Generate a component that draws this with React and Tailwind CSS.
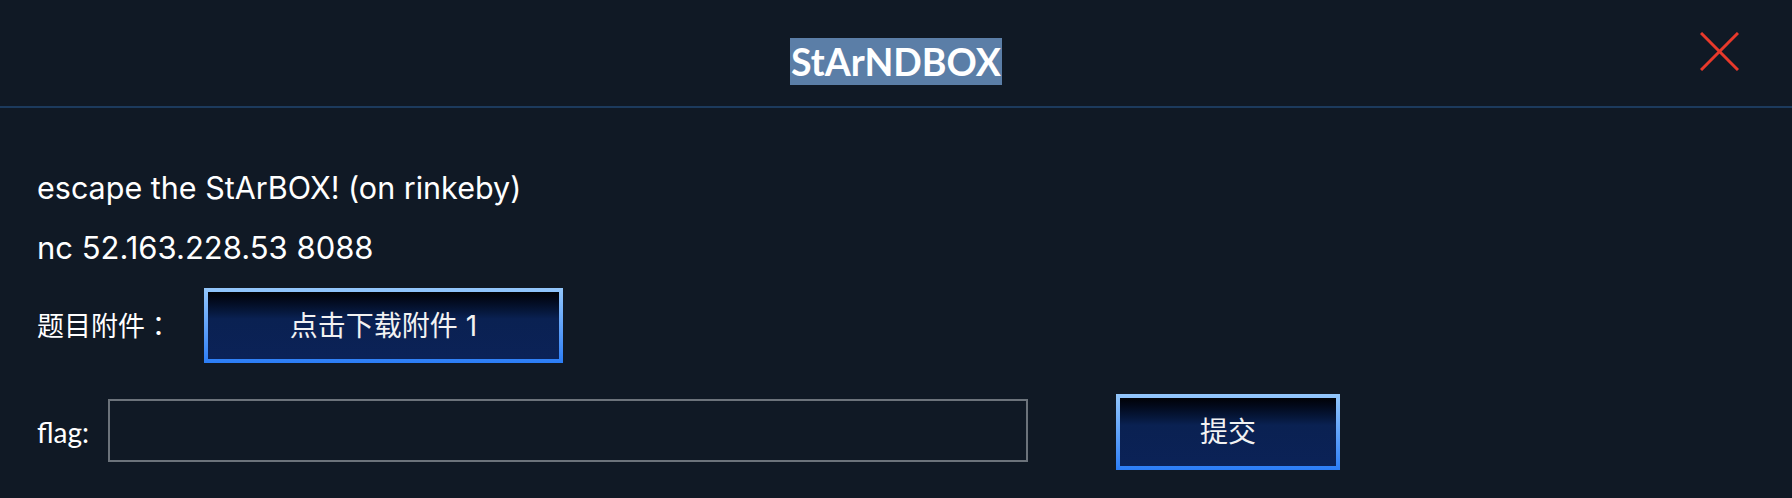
import React from 'react';

const CJK = "font-['Inter','Noto_Sans_CJK_SC',sans-serif]";

function GlowButton({ children, className = '' }) {
  return (
    <button className={`p-[4px] bg-gradient-to-b from-[#93c6fb] to-[#2b7df6] ${className}`}>
      <span className="flex h-full w-full items-center justify-center bg-gradient-to-b from-[#010308] via-[#0a2152] via-40% to-[#0b2257] text-[28px] text-[#f2f2f2]">
        {children}
      </span>
    </button>
  );
}

export default function App() {
  return (
    <div className={`min-h-screen w-full bg-[#101925] text-white ${CJK}`}>
      {/* Header */}
      <div className="grid h-[108px] grid-cols-[1fr_auto_1fr] border-b-2 border-[#1c3a5d]">
        <div />
        <div className="pt-[38px]">
          <span className="inline-block h-[47px] bg-[#5b7ea7] px-[1px] font-['Lato',sans-serif] text-[37.5px] font-bold leading-[47px] text-white">
            StArNDBOX
          </span>
        </div>
        <div className="flex justify-end pr-[53px] pt-[32px]">
          <button aria-label="Close" className="h-[39px] w-[39px]">
            <svg width="39" height="39" viewBox="0 0 39 39" fill="none" stroke="#e8392b" strokeWidth="3">
              <line x1="1" y1="1" x2="38" y2="38" />
              <line x1="38" y1="1" x2="1" y2="38" />
            </svg>
          </button>
        </div>
      </div>

      {/* Body */}
      <div className="px-[37px] pt-[50px]">
        <p className="h-[60px] text-[30.5px] leading-[60px]">escape the StArBOX! (on rinkeby)</p>
        <p className="h-[60px] text-[31px] leading-[60px]">nc 52.163.228.53 8088</p>

        <div className="mt-[10px] flex h-[75px] items-center">
          <span className="w-[167px] font-['Noto_Sans_CJK_TC',sans-serif] text-[27px]">题目附件：</span>
          <GlowButton className="h-[75px] w-[359px]">点击下载附件 1</GlowButton>
        </div>

        <div className="mt-[31px] flex h-[76px] items-center">
          <label className="w-[71px] font-['Lato',sans-serif] text-[28px] text-white">flag:</label>
          <input
            type="text"
            className="mt-[-4px] h-[63px] w-[920px] border-2 border-[#6c737b] bg-transparent px-3 text-[24px] text-white outline-none"
          />
          <GlowButton className="ml-[88px] h-[76px] w-[224px]">提交</GlowButton>
        </div>
      </div>
    </div>
  );
}
